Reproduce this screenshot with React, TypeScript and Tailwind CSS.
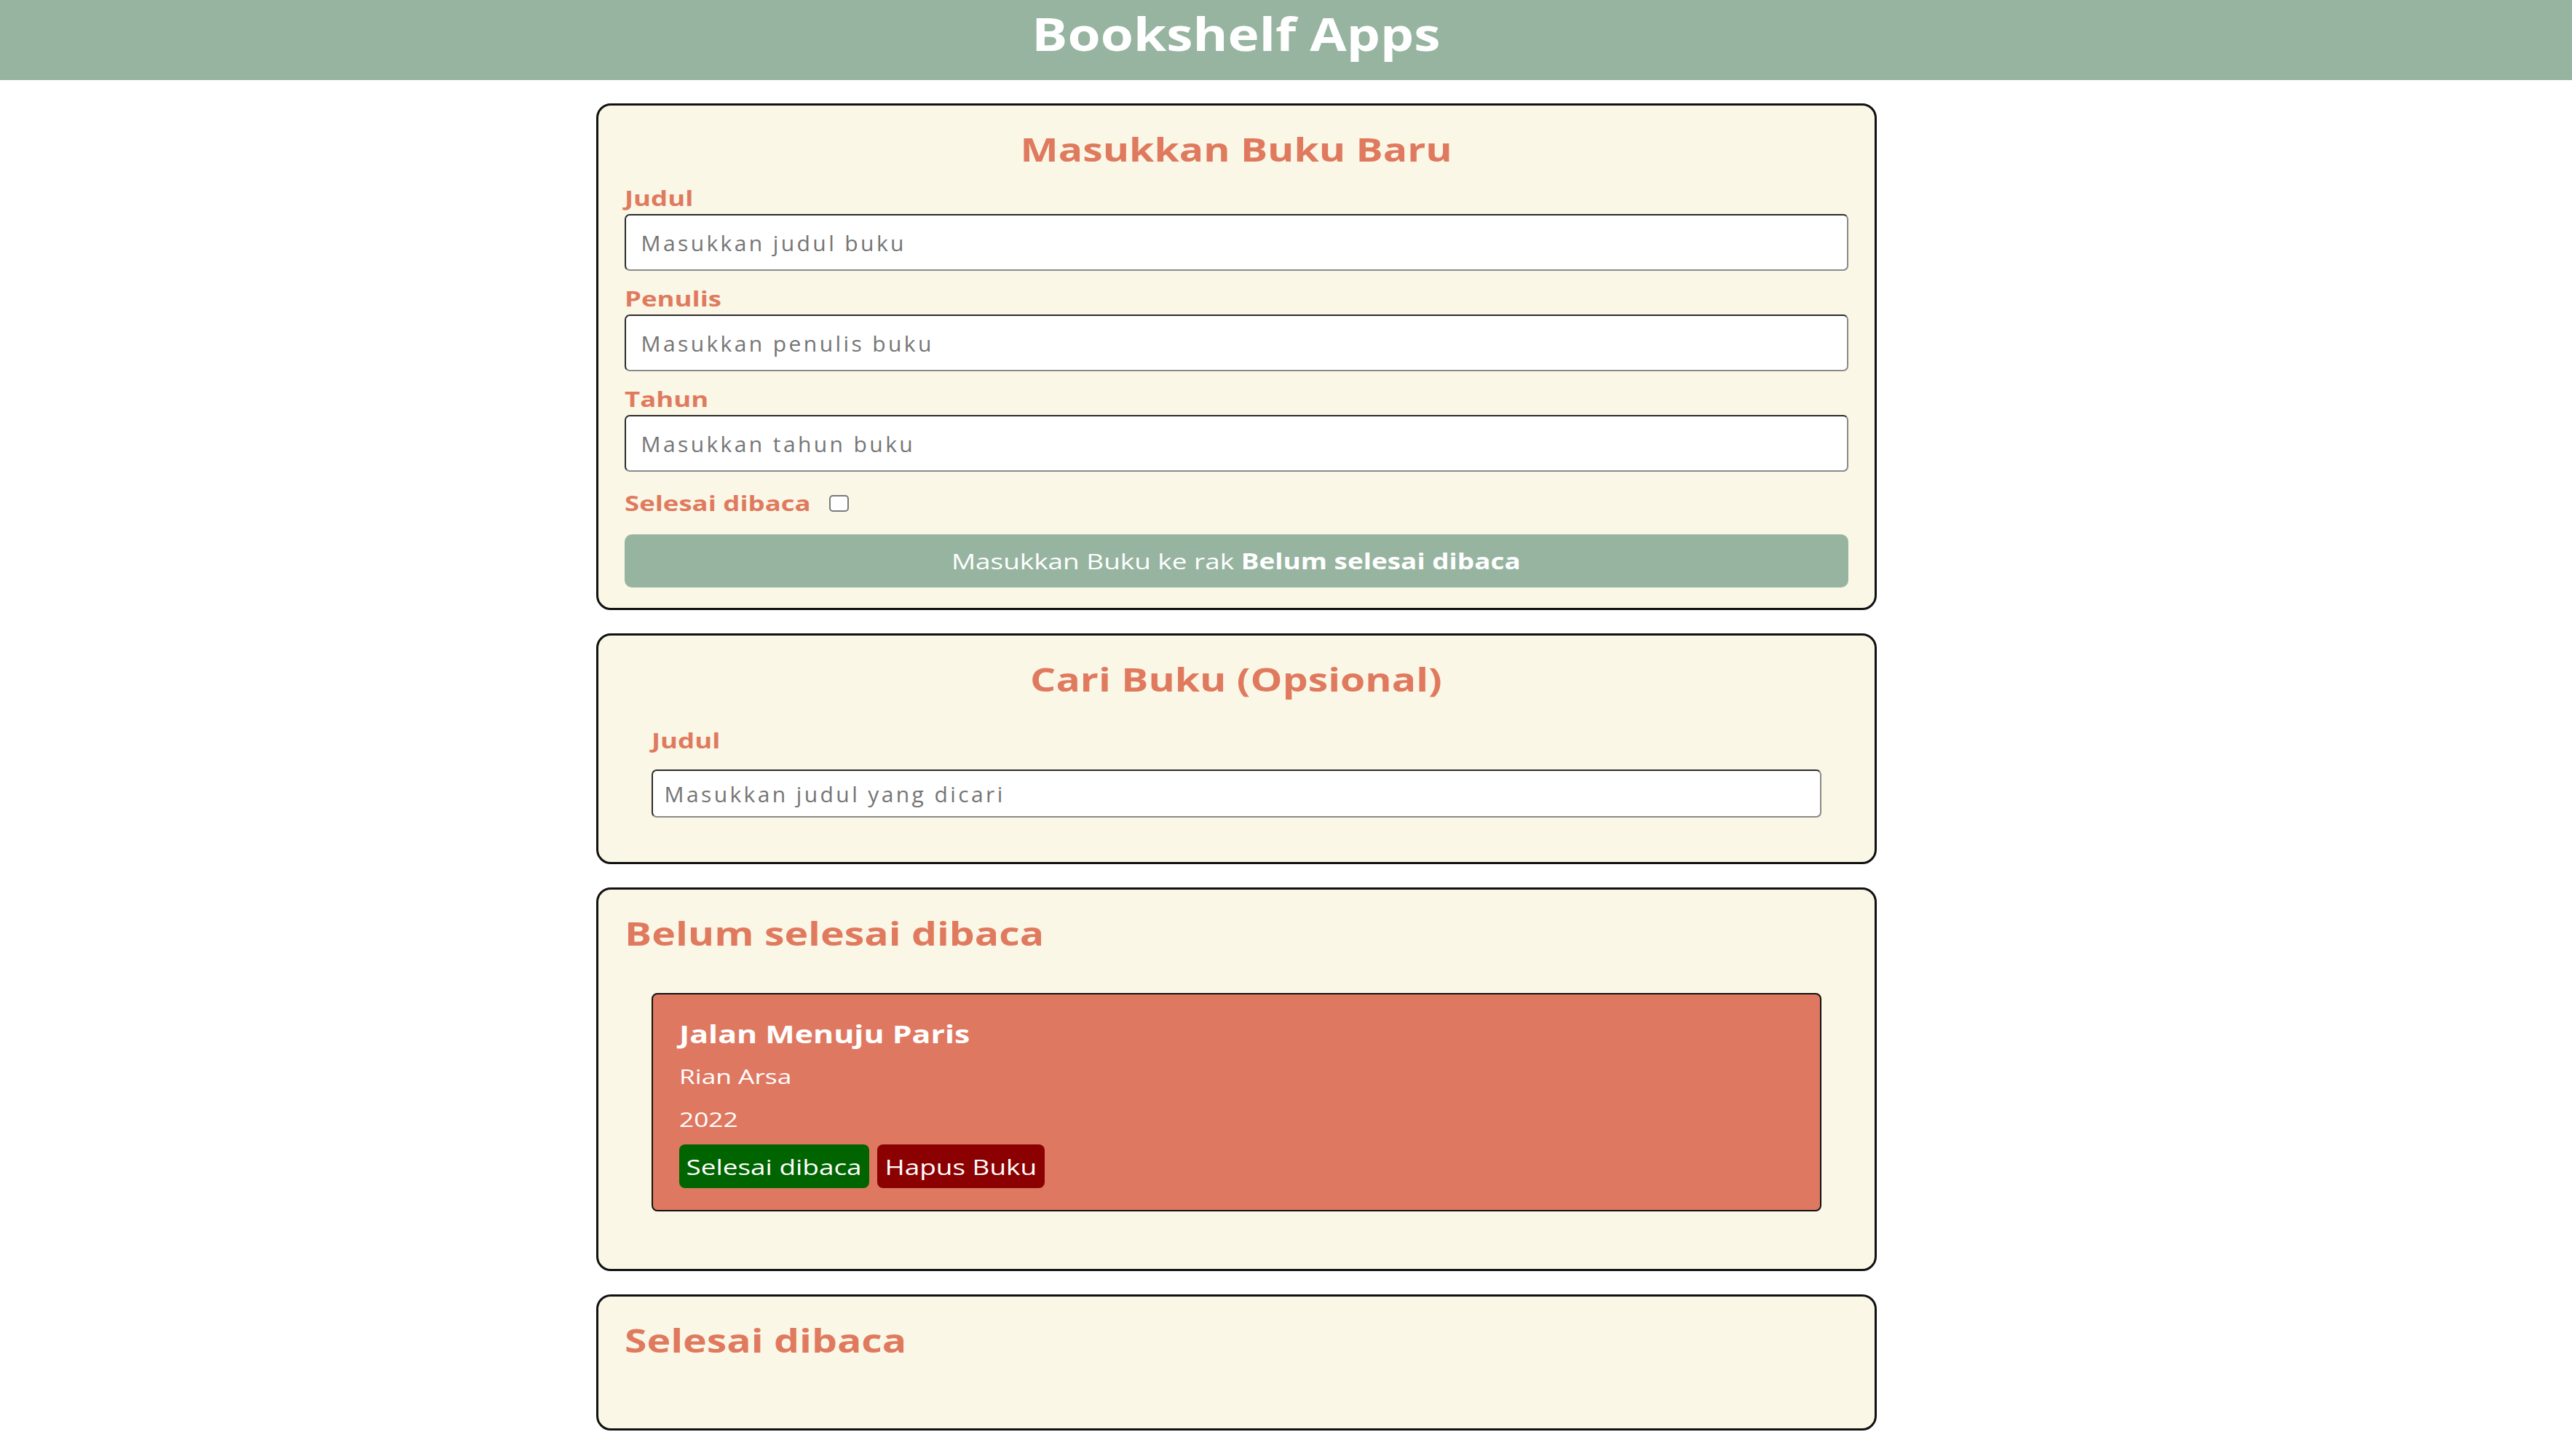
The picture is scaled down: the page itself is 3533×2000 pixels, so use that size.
import { useState } from "react";

type Book = {
  id: number;
  title: string;
  author: string;
  year: number;
  isComplete: boolean;
};

// the glyphs in this design are drawn a bit wider than Open Sans, so text runs get stretched
const wide = "inline-block scale-x-[1.23]";
const wideLeft = "inline-block origin-left scale-x-[1.26]";

const inputClass =
  "w-full rounded-[7px] border-2 border-t-[#2b2b2b] border-l-[#2b2b2b] border-r-[#8a8a8a] border-b-[#8a8a8a] bg-white text-[30px] tracking-[3.4px] text-[#222] placeholder:text-[#757575] outline-none";

const labelClass = "text-[29px] font-bold leading-[40px] text-[#e07a5f]";

const cardClass =
  "w-[1759px] rounded-[20px] border-[3px] border-[#111] bg-[#faf7e6] px-[36px] pt-[29px]";

const headingClass = "text-[45px] font-bold leading-[61px] text-[#e07a5f]";

function Field({ id, label, placeholder }: { id: string; label: string; placeholder: string }) {
  return (
    <div className="flex flex-col gap-[2px]">
      <label htmlFor={id} className={labelClass}>
        <span className={wideLeft}>{label}</span>
      </label>
      <input id={id} type="text" placeholder={placeholder} className={`${inputClass} h-[78px] pl-[21px]`} />
    </div>
  );
}

function BookItem({ book }: { book: Book }) {
  return (
    <article className="mx-[37px] rounded-[8px] border-2 border-[#111] bg-[#df7861] px-[36px] pt-[31px] pb-[30px] text-white">
      <h3 className="text-[34px] font-bold leading-[46px]">
        <span className={wideLeft}>{book.title}</span>
      </h3>
      <p className="mt-[16px] text-[28px] leading-[38px]">
        <span className={wideLeft}>{book.author}</span>
      </p>
      <p className="mt-[21px] text-[28px] leading-[38px]">
        <span className={wideLeft}>{book.year}</span>
      </p>
      <div className="mt-[16px] flex gap-[11px]">
        <button className="h-[60px] w-[261px] rounded-[8px] bg-[#006400] text-[30px] text-white">
          <span className={wide}>{book.isComplete ? "Belum selesai dibaca" : "Selesai dibaca"}</span>
        </button>
        <button className="h-[60px] w-[230px] rounded-[8px] bg-[#8b0000] text-[30px] text-white">
          <span className={wide}>Hapus Buku</span>
        </button>
      </div>
    </article>
  );
}

export default function App() {
  const [books] = useState<Book[]>([
    { id: 1, title: "Jalan Menuju Paris", author: "Rian Arsa", year: 2022, isComplete: false },
  ]);

  const unread = books.filter((b) => !b.isComplete);
  const done = books.filter((b) => b.isComplete);

  return (
    <div className="min-h-screen bg-white font-['Open_Sans',sans-serif]">
      <header className="h-[110px] bg-[#96b4a0] pr-[137px]">
        <h1 className="pt-[14px] text-center text-[63px] font-bold leading-none text-white">
          <span className="inline-block scale-x-[1.16]">Bookshelf Apps</span>
        </h1>
      </header>

      <main className="flex flex-col items-center gap-[32px] pt-[32px] pb-[40px] pr-[137px]">
        {/* input form */}
        <section className={`${cardClass} pb-[28px]`}>
          <h2 className={`${headingClass} text-center`}>
            <span className={wide}>Masukkan Buku Baru</span>
          </h2>
          <form className="mt-[17px] flex flex-col gap-[18px]" onSubmit={(e) => e.preventDefault()}>
            <Field id="inputBookTitle" label="Judul" placeholder="Masukkan judul buku" />
            <Field id="inputBookAuthor" label="Penulis" placeholder="Masukkan penulis buku" />
            <Field id="inputBookYear" label="Tahun" placeholder="Masukkan tahun buku" />
            <div className="mt-[5px] flex h-[40px] items-center gap-[79px]">
              <label htmlFor="inputBookIsComplete" className={labelClass}>
                <span className={wideLeft}>Selesai dibaca</span>
              </label>
              <input
                id="inputBookIsComplete"
                type="checkbox"
                className="h-[23px] w-[27px] appearance-none rounded-[5px] border-2 border-[#7a7a7a] bg-white"
              />
            </div>
            <button
              type="submit"
              className="mt-[5px] h-[73px] w-full rounded-[10px] bg-[#96b4a0] text-[30px] text-white"
            >
              <span className={wide}>
                Masukkan Buku ke rak <span className="font-bold">Belum selesai dibaca</span>
              </span>
            </button>
          </form>
        </section>

        {/* search */}
        <section className={`${cardClass} pb-[61px]`}>
          <h2 className={`${headingClass} text-center`}>
            <span className={wide}>Cari Buku (Opsional)</span>
          </h2>
          <form className="mt-[34px] flex flex-col gap-[20px] px-[37px]" onSubmit={(e) => e.preventDefault()}>
            <label htmlFor="searchBookTitle" className={labelClass}>
              <span className={wideLeft}>Judul</span>
            </label>
            <input
              id="searchBookTitle"
              type="text"
              placeholder="Masukkan judul yang dicari"
              className={`${inputClass} h-[66px] pl-[16px] text-[29px]`}
            />
          </form>
        </section>

        {/* shelves */}
        <section className={`${cardClass} pb-[79px]`}>
          <h2 className={headingClass}>
            <span className={`${wide} origin-left`}>Belum selesai dibaca</span>
          </h2>
          <div className="mt-[52px] flex flex-col gap-[24px]">
            {unread.map((b) => (
              <BookItem key={b.id} book={b} />
            ))}
          </div>
        </section>

        <section className={`${cardClass} pb-[91px]`}>
          <h2 className={headingClass}>
            <span className={`${wide} origin-left`}>Selesai dibaca</span>
          </h2>
          <div className="flex flex-col gap-[24px]">
            {done.map((b) => (
              <BookItem key={b.id} book={b} />
            ))}
          </div>
        </section>
      </main>
    </div>
  );
}
